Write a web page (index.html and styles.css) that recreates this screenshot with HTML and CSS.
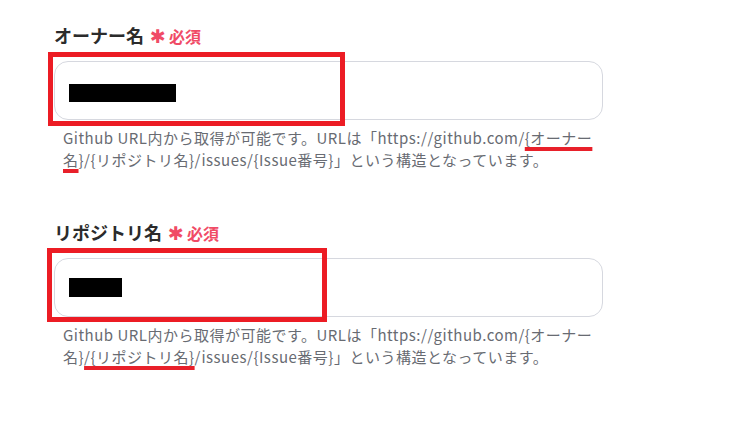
FILE: index.html
```html
<!DOCTYPE html>
<html lang="ja">
<head>
  <meta charset="UTF-8" />
  <meta name="viewport" content="width=device-width, initial-scale=1.0"/>
  <title>GitHub 設定</title>
  <link rel="stylesheet" href="styles.css">
</head>
<body>
  <div class="form">
    <div class="field">
      <div class="label">オーナー名<span class="req"><span class="star">✱</span>必須</span></div>
      <div class="input">
        <span class="redact redact-owner"></span>
        <div class="mark mark-owner"></div>
      </div>
      <p class="help">Github URL内から取得が可能です。URLは「https://github.com/<span class="hl">{オーナー</span><span class="hl">名</span>}/{リポジトリ名}/issues/{Issue番号}」という構造となっています。</p>
    </div>

    <div class="field">
      <div class="label">リポジトリ名<span class="req"><span class="star">✱</span>必須</span></div>
      <div class="input">
        <span class="redact redact-repo"></span>
        <div class="mark mark-repo"></div>
      </div>
      <p class="help">Github URL内から取得が可能です。URLは「https://github.com/{オーナー名}<span class="hl">/{リポジトリ名}</span>/issues/{Issue番号}」という構造となっています。</p>
    </div>
  </div>
</body>
</html>
```

FILE: styles.css
```css
body {
  margin: 0;
  background: #fff;
  font-family: "Noto Sans CJK JP", sans-serif;
  color: #222;
}
.form {
  padding: 22px 0 0 54px;
  width: 549px;
}
.field {
  margin-bottom: 48px;
}
.label {
  font-size: 18px;
  font-weight: 700;
  line-height: 26px;
  margin-bottom: 12px;
  color: #2b2b2b;
}
.req {
  color: #f04b66;
  font-size: 16px;
  margin-left: 6px;
}
.star {
  font-family: "DejaVu Sans", sans-serif;
  font-size: 19px;
  line-height: 1;
  margin-right: 3px;
}
.input {
  position: relative;
  height: 57px;
  border: 1px solid #d6d8df;
  border-radius: 14px;
  padding-left: 14px;
  display: flex;
  align-items: center;
}
.redact {
  display: block;
  background: #000;
}
.redact-owner {
  width: 107px;
  height: 18px;
  margin-top: 4px;
}
.redact-repo {
  width: 53px;
  height: 19px;
}
.mark {
  position: absolute;
  border: 5px solid #ec1c24;
  box-sizing: border-box;
}
.mark-owner {
  left: -7px;
  top: -10px;
  width: 297px;
  height: 74px;
}
.mark-repo {
  left: -8px;
  top: -11px;
  width: 280px;
  height: 74px;
}
.help {
  margin: 7px 0 0;
  padding: 0 9px;
  font-size: 15px;
  line-height: 22px;
  letter-spacing: 0.5px;
  color: #686b72;
}
.hl {
  text-decoration: underline;
  text-decoration-color: #e8202a;
  text-decoration-thickness: 4px;
  text-underline-offset: 3px;
}
```
